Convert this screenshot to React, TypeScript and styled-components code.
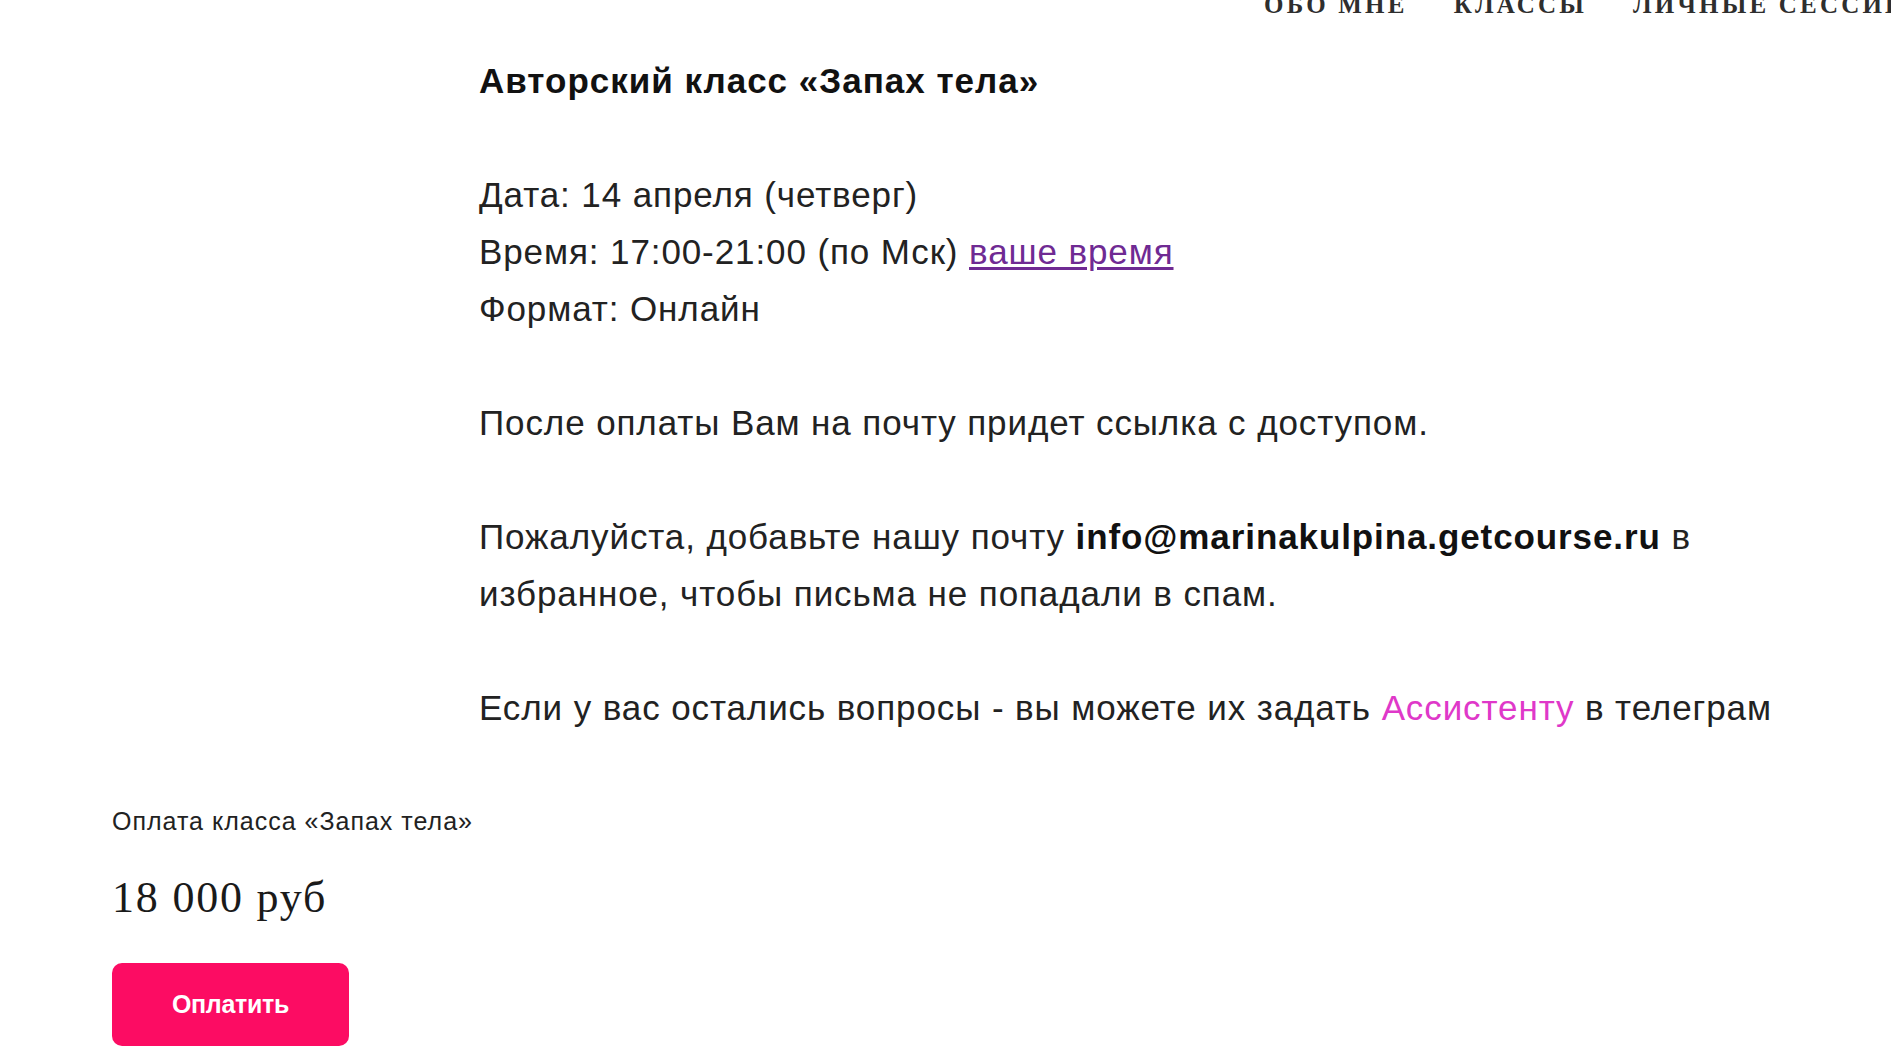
import { styled, createGlobalStyle } from "styled-components";

const GlobalStyle = createGlobalStyle`
  html, body {
    margin: 0;
    padding: 0;
    background: #ffffff;
    overflow: hidden;
  }
`;

const navItems = ["ОБО МНЕ", "КЛАССЫ", "ЛИЧНЫЕ СЕССИИ", "КОНТАКТЫ"];

//**App : страница оплаты класса
const App = () => {
  return (
    <Page>
      <GlobalStyle />
      <Header>
        <Nav>
          {navItems.map((item) => (
            <NavLink key={item}>{item}</NavLink>
          ))}
        </Nav>
      </Header>

      <Article>
        <Title>Авторский класс «Запах тела»</Title>
        <Blank />
        <Line>Дата: 14 апреля (четверг)</Line>
        <Line>
          Время: 17:00-21:00 (по Мск) <TimeLink>ваше время</TimeLink>
        </Line>
        <Line>Формат: Онлайн</Line>
        <Blank />
        <Line>После оплаты Вам на почту придет ссылка с доступом.</Line>
        <Blank />
        <Line>
          Пожалуйста, добавьте нашу почту <b>info@marinakulpina.getcourse.ru</b> в
        </Line>
        <Line>избранное, чтобы письма не попадали в спам.</Line>
        <Blank />
        <Line>
          Если у вас остались вопросы - вы можете их задать <Assistant>Ассистенту</Assistant> в телеграм
        </Line>
      </Article>

      <PaySection>
        <PayLabel>Оплата класса «Запах тела»</PayLabel>
        <Price>18 000 руб</Price>
        <PayButton>Оплатить</PayButton>
      </PaySection>
    </Page>
  );
};

export default App;


const Page = styled.div`
  width: 1891px;
  height: 1063px;
  overflow: hidden;
  display: flex;
  flex-direction: column;
`;

const Header = styled.header`
  display: flex;
  margin-top: -7px;
  height: 24px;
  white-space: nowrap;
`;

const Nav = styled.nav`
  display: flex;
  gap: 46px;
  margin-left: 1264px;
`;

const NavLink = styled.span`
  font-family: "Liberation Serif", "DejaVu Serif", serif;
  font-weight: 700;
  font-size: 25px;
  line-height: 24px;
  letter-spacing: 3.2px;
  color: #2e2e2e;
`;

//Article : основной текст о классе
const Article = styled.div`
  margin-top: 35px;
  padding-left: 479px;
  font-family: "Liberation Sans", Arial, sans-serif;
  font-size: 35px;
  line-height: 57px;
  letter-spacing: 0.9px;
  color: #222222;

  b {
    font-weight: 700;
    color: #111111;
  }
`;

const Title = styled.div`
  font-weight: 700;
  color: #111111;
  white-space: nowrap;
  letter-spacing: 1px;
`;

const Line = styled.div`
  white-space: nowrap;
`;

const Blank = styled.div`
  height: 57px;
`;

const TimeLink = styled.a`
  color: #6f2a93;
  text-decoration: underline;
  text-underline-offset: 3px;
  cursor: pointer;
`;

const Assistant = styled.a`
  color: #df38c9;
  cursor: pointer;
`;

//PaySection : блок оплаты
const PaySection = styled.div`
  display: flex;
  flex-direction: column;
  align-items: flex-start;
  padding-left: 112px;
  margin-top: 70px;
`;

const PayLabel = styled.div`
  font-family: "Liberation Sans", Arial, sans-serif;
  font-size: 25px;
  line-height: 30px;
  letter-spacing: 1px;
  color: #222222;
`;

const Price = styled.div`
  margin-top: 37px;
  font-family: "Liberation Serif", "DejaVu Serif", serif;
  font-size: 44px;
  line-height: 50px;
  letter-spacing: 1.8px;
  color: #1a1a1a;
`;

const PayButton = styled.button`
  margin-top: 40px;
  width: 237px;
  height: 83px;
  border: none;
  border-radius: 10px;
  background: #fc0c63;
  color: #ffffff;
  font-family: "Liberation Sans", Arial, sans-serif;
  font-weight: 700;
  font-size: 25px;
  letter-spacing: -0.3px;
  cursor: pointer;
`;
